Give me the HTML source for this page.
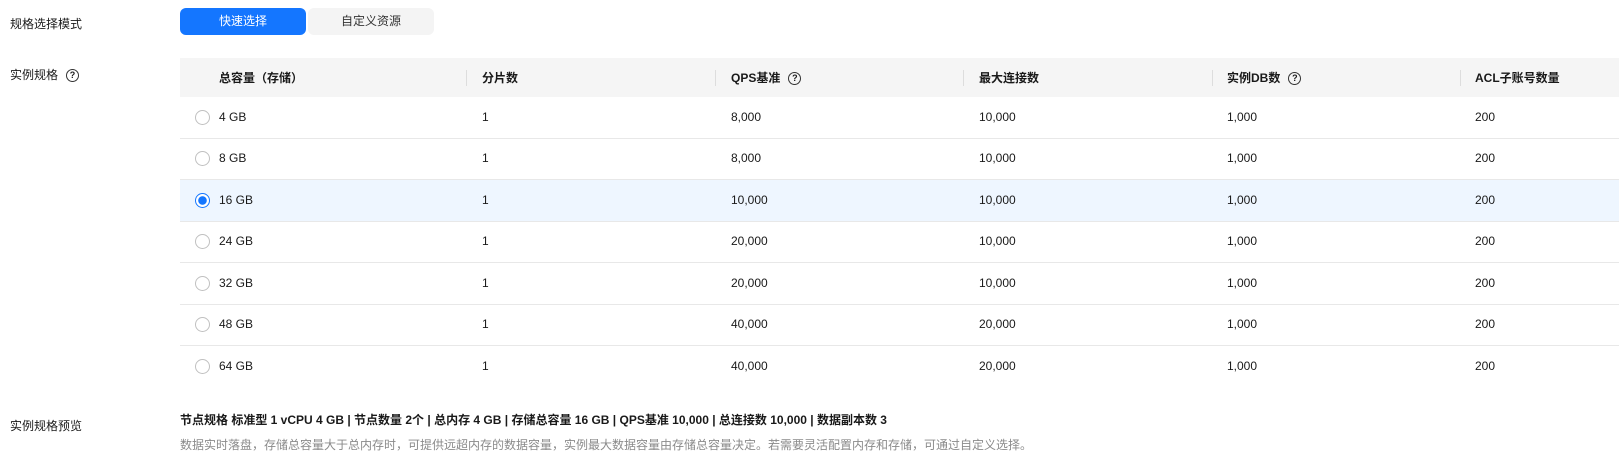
<!DOCTYPE html>
<html><head><meta charset="utf-8"><style>
body{margin:0;width:1619px;height:475px;background:#fff;font-family:"Liberation Sans","Noto Sans CJK SC",sans-serif;font-size:12px;color:#191919;position:relative;overflow:hidden}
.a{position:absolute;white-space:nowrap}
.btn{position:absolute;top:8px;height:27px;line-height:27px;text-align:center;border-radius:6px}
.q{display:inline-block;width:11px;height:11px;border:1.3px solid #333;border-radius:50%;font-size:9px;line-height:11px;text-align:center;font-weight:bold;vertical-align:middle;margin-left:8px}
.row{position:absolute;left:180px;width:1439px;height:41px;border-bottom:1px solid #e8e8e8}
.row span{position:absolute;top:13px;white-space:nowrap}
.row span .q{position:static}
.rad{position:absolute;left:15px;top:13px;width:13px;height:13px;border:1px solid #c0c0c0;border-radius:50%;background:#fff}
.hd span{font-weight:bold;top:11px}
.sep{position:absolute;top:12px;width:1px;height:16px;background:#ddd}
</style></head><body>
<div class="a" style="left:10px;top:15px">规格选择模式</div>
<div class="btn" style="left:180px;width:126px;background:#1476ff;color:#fff">快速选择</div>
<div class="btn" style="left:308px;width:126px;background:#f4f4f4;color:#333">自定义资源</div>
<div class="a" style="left:10px;top:66px">实例规格<span class="q">?</span></div>

<div class="row hd" style="top:58px;height:39px;background:#f5f5f5;border:none">
<span style="left:39px">总容量（存储）</span><div class="sep" style="left:286px"></div>
<span style="left:302px">分片数</span><div class="sep" style="left:535px"></div>
<span style="left:551px">QPS基准<span class="q">?</span></span><div class="sep" style="left:783px"></div>
<span style="left:799px">最大连接数</span><div class="sep" style="left:1032px"></div>
<span style="left:1047px">实例DB数<span class="q">?</span></span><div class="sep" style="left:1280px"></div>
<span style="left:1295px">ACL子账号数量</span>
</div>

<div class="row" style="top:97px"><div class="rad"></div><span style="left:39px">4 GB</span><span style="left:302px">1</span><span style="left:551px">8,000</span><span style="left:799px">10,000</span><span style="left:1047px">1,000</span><span style="left:1295px">200</span></div>
<div class="row" style="top:138px"><div class="rad"></div><span style="left:39px">8 GB</span><span style="left:302px">1</span><span style="left:551px">8,000</span><span style="left:799px">10,000</span><span style="left:1047px">1,000</span><span style="left:1295px">200</span></div>
<div class="row" style="top:180px;background:#eef6ff"><div class="rad" style="border-color:#1476ff;background:radial-gradient(circle,#1476ff 0 4px,#fff 4.5px)"></div><span style="left:39px">16 GB</span><span style="left:302px">1</span><span style="left:551px">10,000</span><span style="left:799px">10,000</span><span style="left:1047px">1,000</span><span style="left:1295px">200</span></div>
<div class="row" style="top:221px"><div class="rad"></div><span style="left:39px">24 GB</span><span style="left:302px">1</span><span style="left:551px">20,000</span><span style="left:799px">10,000</span><span style="left:1047px">1,000</span><span style="left:1295px">200</span></div>
<div class="row" style="top:263px"><div class="rad"></div><span style="left:39px">32 GB</span><span style="left:302px">1</span><span style="left:551px">20,000</span><span style="left:799px">10,000</span><span style="left:1047px">1,000</span><span style="left:1295px">200</span></div>
<div class="row" style="top:304px"><div class="rad"></div><span style="left:39px">48 GB</span><span style="left:302px">1</span><span style="left:551px">40,000</span><span style="left:799px">20,000</span><span style="left:1047px">1,000</span><span style="left:1295px">200</span></div>
<div class="row" style="top:346px;border-bottom:none"><div class="rad"></div><span style="left:39px">64 GB</span><span style="left:302px">1</span><span style="left:551px">40,000</span><span style="left:799px">20,000</span><span style="left:1047px">1,000</span><span style="left:1295px">200</span></div>

<div class="a" style="left:10px;top:417px">实例规格预览</div>
<div class="a" style="left:180px;top:411px;font-weight:bold">节点规格 标准型 1 vCPU 4 GB | 节点数量 2个 | 总内存 4 GB | 存储总容量 16 GB | QPS基准 10,000 | 总连接数 10,000 | 数据副本数 3</div>
<div class="a" style="left:180px;top:436px;color:#8a8a8a">数据实时落盘，存储总容量大于总内存时，可提供远超内存的数据容量，实例最大数据容量由存储总容量决定。若需要灵活配置内存和存储，可通过自定义选择。</div>
</body></html>
